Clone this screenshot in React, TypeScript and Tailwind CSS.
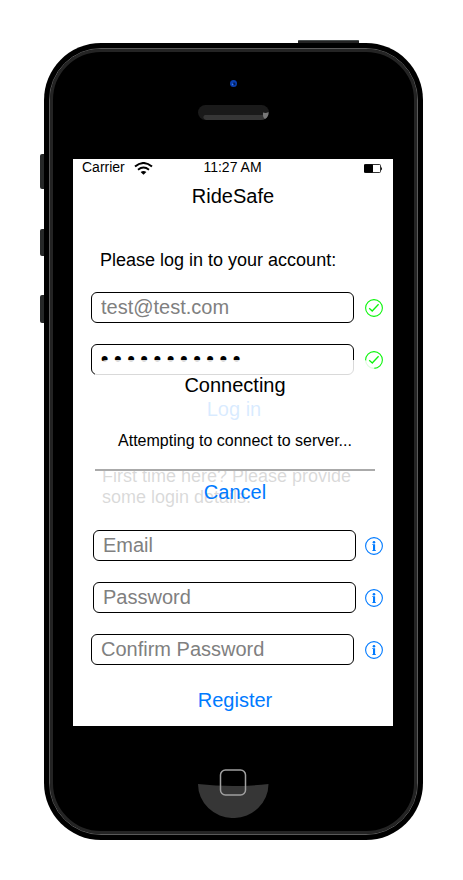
import React from "react";

function CheckIcon() {
  return (
    <svg className="h-[18px] w-[18px] shrink-0" viewBox="0 0 18 18" fill="none" stroke="#0bf50b" strokeWidth="1.1" role="img" aria-label="Valid">
      <circle cx="9" cy="9" r="8.4" />
      <path d="M4.2 9.2 7.2 12 13.6 5.2" strokeWidth="1.3" />
    </svg>
  );
}

function InfoIcon() {
  return (
    <svg className="h-[18px] w-[18px]" viewBox="0 0 18 18" fill="none" role="img" aria-label="Information">
      <circle cx="9" cy="9" r="8.4" stroke="#007aff" strokeWidth="1.1" />
      <circle cx="9" cy="5.2" r="1.3" fill="#007aff" />
      <path d="M7.2 7.3H10.1V13.2H11V14H7.2V13.2H8V8.1H7.2Z" fill="#007aff" />
    </svg>
  );
}

const fieldClass =
  "block h-[31px] w-full rounded-[6px] border border-black bg-white pl-[9px] pr-2 text-[20px] leading-[24px] text-[#808080] placeholder:text-[#808080] outline-none";

function StatusBar() {
  return (
    <div className="grid h-4 grid-cols-[1fr_auto_1fr] items-center pl-[9px] pr-[10px] text-[14px] leading-4">
      <div className="flex items-center gap-[9px]">
        <span>Carrier</span>
        <svg className="mt-[3px] h-[13px] w-[19px]" viewBox="0 0 19 13" fill="none" stroke="#000" aria-hidden="true">
          <path d="M1 4.6Q9.5-2.6 18 4.6" strokeWidth="2" />
          <path d="M4 7.8Q9.5 3.4 15 7.8" strokeWidth="1.9" />
          <path d="M6.6 10Q9.5 7.8 12.4 10L9.5 12.8Z" fill="#000" stroke="none" />
        </svg>
      </div>
      <span>11:27 AM</span>
      <svg className="mt-[3px] h-[9px] w-[19px] justify-self-end" viewBox="0 0 19 9" aria-hidden="true">
        <rect x="0.5" y="0.5" width="16" height="8" rx="1" fill="#fff" stroke="#000" strokeWidth="0.8" />
        <rect x="0" y="0.3" width="9" height="8.4" rx="1" fill="#000" />
        <path d="M17 2.5Q18.8 4.5 17 6.5Z" fill="#000" />
      </svg>
    </div>
  );
}

function Field({ children, icon, inset }: { children: React.ReactNode; icon: React.ReactNode; inset?: boolean }) {
  return (
    <div className={inset ? "flex items-center gap-[9px] pl-5 pr-[10px]" : "flex items-center gap-[11px] pl-[18px] pr-[10px]"}>
      <div className="min-w-0 flex-1">{children}</div>
      {icon}
    </div>
  );
}

function InfoButton({ label }: { label: string }) {
  return (
    <button type="button" aria-label={label} className="h-[18px] w-[18px] shrink-0">
      <InfoIcon />
    </button>
  );
}

function ConnectingDialog() {
  return (
    <div role="dialog" aria-label="Connecting" className="absolute left-[22px] right-[18px] top-[201px] flex flex-col rounded-[12px] bg-white/85 pb-[9px] pt-[13px] text-center">
      <h2 className="text-[20px] leading-[24px]">Connecting</h2>
      <p className="mt-[34px] text-[16px] leading-[20px]">Attempting to connect to server...</p>
      <hr className="mt-[18px] h-[2px] border-0 bg-[#aaaaaa]" />
      <button type="button" className="mt-[9px] self-center text-[20px] leading-[24px] text-[#007aff]">Cancel</button>
    </div>
  );
}

function Screen() {
  return (
    <main className="relative w-full bg-white pb-[14px] text-black">
      <StatusBar />
      <h1 className="mt-[9px] text-center text-[20px] leading-[24px]">RideSafe</h1>
      <form className="mt-[42px] flex flex-col">
        <p className="pl-[27px] text-[18px] leading-[21px]">Please log in to your account:</p>
        <div className="mt-[21px] flex flex-col gap-[21px]">
          <Field icon={<CheckIcon />}>
            <input aria-label="Account email" type="email" defaultValue="test@test.com" className={fieldClass} />
          </Field>
          <Field icon={<CheckIcon />}>
            <input
              aria-label="Account password"
              type="password"
              defaultValue="ridesafe123"
              className="block h-[31px] w-full rounded-[6px] border border-black bg-white px-[6px] pt-[2px] font-['Liberation_Mono',monospace] text-[22px] leading-[24px] text-black outline-none"
            />
          </Field>
        </div>
        <button type="button" className="ml-[2px] mt-[22px] self-center text-[20px] leading-[24px] text-[#007aff]">Log in</button>
      </form>
      <form className="mt-[45px] flex flex-col">
        <p className="pl-[29px] pr-8 text-[18px] leading-[21px]">First time here? Please provide some login details.</p>
        <div className="mt-[22px] flex flex-col gap-[21px]">
          <Field inset icon={<InfoButton label="About email" />}>
            <input aria-label="Email" type="email" placeholder="Email" className={fieldClass} />
          </Field>
          <Field inset icon={<InfoButton label="About password" />}>
            <input aria-label="Password" type="password" placeholder="Password" className={fieldClass} />
          </Field>
          <Field icon={<InfoButton label="About confirmation" />}>
            <input aria-label="Confirm Password" type="password" placeholder="Confirm Password" className={fieldClass} />
          </Field>
        </div>
        <button type="button" className="ml-[4px] mt-[23px] self-center text-[20px] leading-[24px] text-[#007aff]">Register</button>
      </form>
      <ConnectingDialog />
    </main>
  );
}

export default function App() {
  return (
    <div className="flex min-h-screen justify-center bg-white px-10 pb-10 pt-10 font-['Liberation_Sans',Arial,sans-serif]">
      <div className="flex w-full max-w-[383px] flex-col">
        <div className="mr-[64px] h-[3px] w-[61px] self-end rounded-t-[1px] border-t border-[#4a4f4f] bg-[#222]" />
        <div className="flex">
          <div className="flex w-1 shrink-0 flex-col pt-[111px]">
            <div className="h-[35px] rounded-l-[2px] bg-[#262828]" />
            <div className="mt-[40px] h-[27px] rounded-l-[2px] bg-[#262828]" />
            <div className="mt-[39px] h-[28px] rounded-l-[2px] bg-[#262828]" />
          </div>
          <div className="min-w-0 flex-1 rounded-[57px] bg-black p-[5px]">
            <div className="rounded-[52px] border border-[#5a5a5a]">
              <div className="flex flex-col items-center rounded-[51px] border-[3px] border-[#242424] bg-black pb-[13px] pl-5 pr-[21px] pt-[28px]">
                <svg className="h-[7px] w-[7px]" viewBox="0 0 7 7" aria-hidden="true">
                  <circle cx="3.5" cy="3.5" r="3.5" fill="#0a3fae" />
                  <circle cx="4.1" cy="3.9" r="1.4" fill="#041a52" />
                  <circle cx="2.7" cy="4.4" r="0.8" fill="#3c7cf0" />
                </svg>
                <svg className="mb-[39px] mt-[18px] h-[15px] w-[71px]" viewBox="0 0 71 15" aria-hidden="true">
                  <rect width="71" height="15" rx="7.5" fill="#1a1a1a" />
                  <path d="M7 10H69.5Q67.5 15 63 15H8Q5 14 5.5 11.5Q6 10 7 10Z" fill="#363636" />
                  <path d="M65 7.5Q68 8.5 70.5 7Q71 11.5 67 14Q64.5 12.5 65 7.5Z" fill="#777" />
                </svg>
                <Screen />
                <button type="button" aria-label="Home" className="mt-[43px]">
                  <svg className="block h-[49px] w-[71px]" viewBox="0 0 71 49" aria-hidden="true">
                    <path d="M0 15Q35 19 70.5 15A35.2 34 0 0 1 0 15Z" fill="#363636" />
                    <rect x="22.5" y="1" width="25" height="25" rx="5" fill="none" stroke="#a0a0a0" strokeWidth="1.5" />
                  </svg>
                </button>
              </div>
            </div>
          </div>
        </div>
      </div>
    </div>
  );
}
